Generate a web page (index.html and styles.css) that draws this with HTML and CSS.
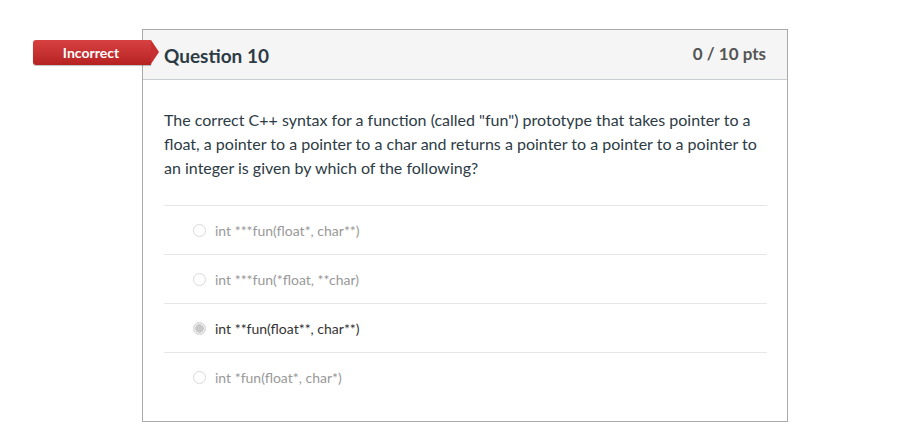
FILE: index.html
```html
<!DOCTYPE html>
<html>
<head>
<meta charset="utf-8">
<link rel="stylesheet" href="styles.css">
</head>
<body>
<div class="page">
  <div class="card">
    <div class="badge">Incorrect</div>
    <div class="header">
      <h2 class="title">Question 10</h2>
      <div class="pts">0 / 10 pts</div>
    </div>
    <div class="body">
      <p class="question">The correct C++ syntax for a function (called "fun") prototype that takes pointer to a float, a pointer to a pointer to a char and returns a pointer to a pointer to a pointer to an integer is given by which of the following?</p>
      <div class="answers">
        <div class="answer"><span class="radio"></span><span class="label">int ***fun(float*, char**)</span></div>
        <div class="answer"><span class="radio"></span><span class="label">int ***fun(*float, **char)</span></div>
        <div class="answer selected"><span class="radio"></span><span class="label">int **fun(float**, char**)</span></div>
        <div class="answer"><span class="radio"></span><span class="label">int *fun(float*, char*)</span></div>
      </div>
    </div>
  </div>
</div>
</body>
</html>
```
FILE: styles.css
```css
html, body {
  margin: 0;
  padding: 0;
  background: #fff;
  font-family: Lato, "Noto Sans", sans-serif;
}
.page {
  padding: 29px 0 0 142px;
}
.card {
  position: relative;
  width: 644px;
  height: 391px;
  border: 1px solid #aaa;
}
.badge {
  position: absolute;
  left: -110px;
  top: 10px;
  width: 118px;
  height: 25px;
  line-height: 25px;
  box-sizing: border-box;
  padding-right: 2px;
  text-align: center;
  color: #fff;
  font-weight: bold;
  font-size: 14px;
  background: linear-gradient(#d84141, #b62222);
  border-radius: 3px 0 0 3px;
  box-shadow: 0 1px 1px rgba(0,0,0,0.25);
}
.badge::after {
  content: "";
  position: absolute;
  right: -8px;
  top: 0;
  width: 0;
  height: 0;
  border-top: 12.5px solid transparent;
  border-bottom: 12.5px solid transparent;
  border-left: 8px solid #c73030;
}
.header {
  height: 49px;
  background: #f5f5f5;
  border-bottom: 1px solid #c7cdd1;
  display: flex;
  align-items: center;
  justify-content: space-between;
  padding: 0 21px;
}
.title {
  margin: 0;
  font-size: 19px;
  font-weight: bold;
  color: #2d3b45;
  padding-top: 1px;
}
.pts {
  font-size: 17px;
  font-weight: bold;
  color: #555;
  padding-bottom: 3px;
}
.body {
  padding: 28px 20px 0 21px;
}
.question {
  margin: 0 0 25px 0;
  font-size: 16px;
  line-height: 24px;
  color: #2d3b45;
}
.answer {
  border-top: 1px solid #e6e6e6;
  height: 48px;
  display: flex;
  align-items: center;
  padding-left: 29px;
}
.radio {
  width: 13px;
  height: 13px;
  border: 1px solid #dadada;
  border-radius: 50%;
  box-sizing: border-box;
  margin-right: 9px;
  background: #fff;
}
.label {
  font-size: 14px;
  color: #999;
}
.selected .label {
  color: #333;
}
.selected .radio {
  border: 1px solid #cfcfcf;
  background: radial-gradient(circle, #c8c8c8 0 4px, #f0f0f0 4.5px);
}
```
